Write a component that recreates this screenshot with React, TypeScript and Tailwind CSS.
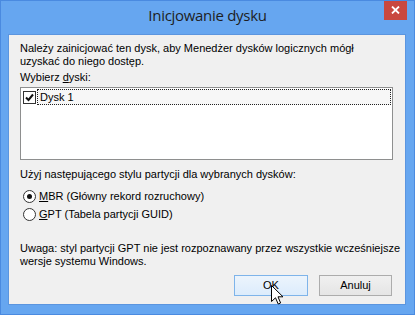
import React from "react";

const body = { fontFamily: '"Liberation Sans", Arial, sans-serif' };

function Cursor() {
  return (
    <svg width="13" height="21" viewBox="0 0 13 21" className="absolute left-[270px] top-[284px]">
      <path d="M0.5 0.5 L0.5 16.5 L4.5 12.8 L7.2 19 L9.6 18 L7 11.8 L12 11.8 Z" fill="#fff" stroke="#000" strokeWidth="1" strokeLinejoin="miter" />
    </svg>
  );
}

export default function App() {
  return (
    <div className="relative w-[415px] h-[315px] bg-[#66a6f0] border border-[#4a8ae0] flex flex-col overflow-hidden" style={body}>
      <div className="relative h-[33px] flex items-center justify-center">
        <span className="text-[15px] tracking-[-0.3px] text-[#1e1e1e] mt-[-4px]" style={{ fontFamily: '"Open Sans", "Noto Sans", sans-serif' }}>Inicjowanie dysku</span>
        <div className="absolute right-[7px] top-[-1px] w-[23px] h-[20px] bg-[#c9483f] flex items-center justify-center">
          <svg width="9" height="8" viewBox="0 0 9 8">
            <path d="M1 0.5 L8 7.5 M8 0.5 L1 7.5" stroke="#fff" strokeWidth="1.8" />
          </svg>
        </div>
      </div>
      <div className="ml-[7px] w-[398px] h-[271px] bg-[#f0f0f0] border border-[#5b95df] flex flex-col text-[11px] leading-[13px] text-[#000] pl-[11px] pt-[7px]">
        <div>Należy zainicjować ten dysk, aby Menedżer dysków logicznych mógł</div>
        <div>uzyskać do niego dostęp.</div>
        <div className="mt-[3px]">Wybierz <span className="underline">d</span>yski:</div>
        <div className="mt-[3px] w-[373px] h-[73px] bg-white border border-[#8e8f8f] pt-[1px] pl-[1px] pr-[1px]">
          <div className="flex items-center h-[16px]">
            <div className="ml-[1px] w-[13px] h-[13px] border border-[#333] bg-white flex items-center justify-center">
              <svg width="9" height="9" viewBox="0 0 9 9">
                <path d="M1 4.5 L3.5 7 L8 1.5" fill="none" stroke="#111" strokeWidth="2" />
              </svg>
            </div>
            <div className="ml-[1px] flex-1 h-[16px] border border-dotted border-[#222] bg-[#f7f7f7] flex items-center pl-[2px]">Dysk 1</div>
          </div>
        </div>
        <div className="mt-[8px]">Użyj następującego stylu partycji dla wybranych dysków:</div>
        <div className="mt-[6px] flex items-center h-[18px]">
          <div className="ml-[3px] w-[13px] h-[13px] rounded-full border border-[#333] bg-white flex items-center justify-center">
            <div className="w-[5px] h-[5px] rounded-full bg-[#111]" />
          </div>
          <span className="ml-[3px]"><span className="underline">M</span>BR (Główny rekord rozruchowy)</span>
        </div>
        <div className="flex items-center h-[18px]">
          <div className="ml-[3px] w-[13px] h-[13px] rounded-full border border-[#333] bg-white" />
          <span className="ml-[3px]"><span className="underline">G</span>PT (Tabela partycji GUID)</span>
        </div>
        <div className="mt-[19px]">Uwaga: styl partycji GPT nie jest rozpoznawany przez wszystkie wcześniejsze</div>
        <div>wersje systemu Windows.</div>
        <div className="mt-[7px] flex justify-end gap-[11px] pr-[13px]">
          <div className="w-[74px] h-[21px] border border-[#7eb4ea] bg-gradient-to-b from-[#ecf4fc] to-[#dcecfc] flex items-center justify-center">OK</div>
          <div className="w-[73px] h-[21px] border border-[#acacac] bg-gradient-to-b from-[#f0f0f0] to-[#e5e5e5] flex items-center justify-center">Anuluj</div>
        </div>
      </div>
      <Cursor />
    </div>
  );
}
